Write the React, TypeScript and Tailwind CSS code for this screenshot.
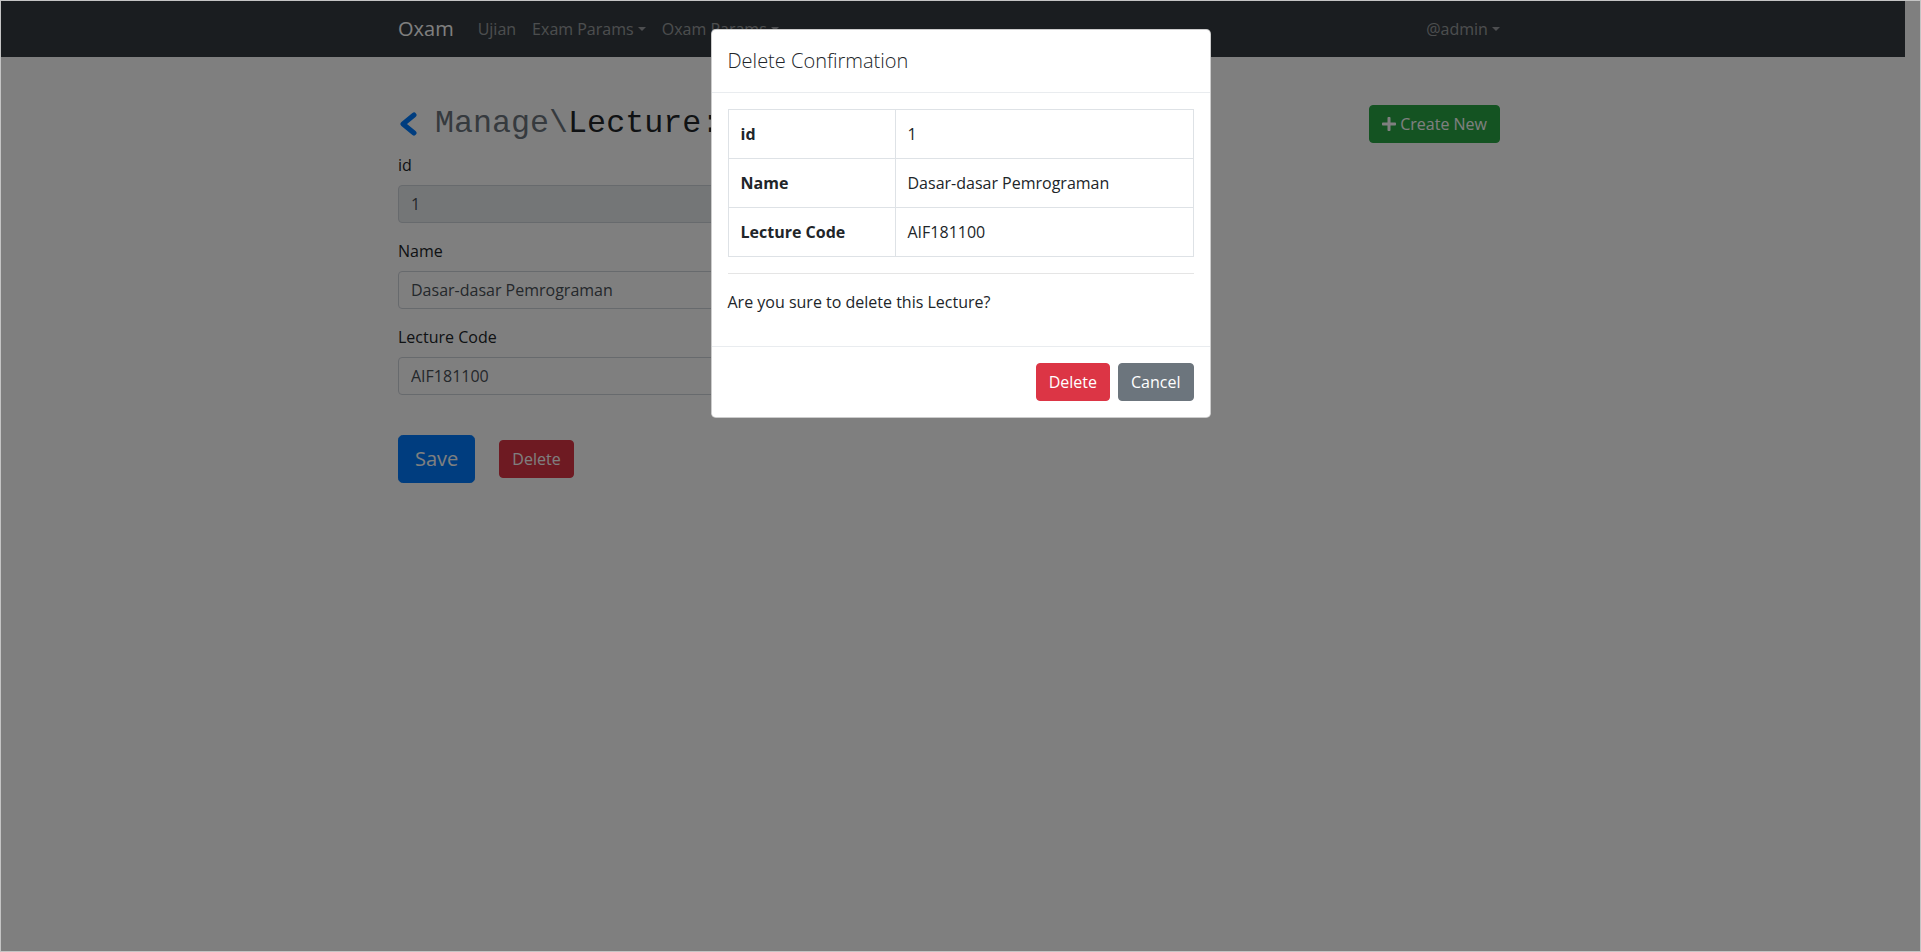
import React from "react";

// Lecture edit page with the delete-confirmation modal open on top

const sans = "font-['Open_Sans',_'Liberation_Sans',_sans-serif]";

function Caret() {
  return (
    <span className="inline-block ml-[0.255em] align-[0.255em] w-0 h-0 border-t-[0.3em] border-l-[0.3em] border-r-[0.3em] border-b-0 border-t-current border-l-transparent border-r-transparent" />
  );
}

function ChevronLeft() {
  return (
    <svg width="20" height="24" viewBox="0 0 20 24" className="shrink-0">
      <polyline
        points="16,3 5,12 16,21"
        fill="none"
        stroke="#007bff"
        strokeWidth="5"
        strokeLinecap="round"
        strokeLinejoin="round"
      />
    </svg>
  );
}

function PlusIcon() {
  return (
    <svg width="14" height="16" viewBox="0 0 448 512" className="shrink-0">
      <path
        fill="currentColor"
        d="M416 208H272V64c0-17.670-14.330-32-32-32h-32c-17.670 0-32 14.330-32 32v144H32c-17.670 0-32 14.330-32 32v32c0 17.670 14.330 32 32 32h144v144c0 17.670 14.330 32 32 32h32c17.670 0 32-14.330 32-32V304h144c17.670 0 32-14.330 32-32v-32c0-17.670-14.330-32-32-32z"
      />
    </svg>
  );
}

function Navbar() {
  return (
    <nav className="bg-[#343a40] h-[56px]">
      <div className="mx-auto w-[1140px] px-[15px] h-full flex items-center">
        <span className="text-white text-[20px] leading-[30px] py-[5px] mr-4">Oxam</span>
        <div className="flex items-center text-white/50 text-base leading-6">
          <span className="px-2 py-2">Ujian</span>
          <span className="px-2 py-2">
            Exam Params
            <Caret />
          </span>
          <span className="px-2 py-2">
            Oxam Params
            <Caret />
          </span>
        </div>
        <div className="ml-auto text-white/50 text-base leading-6">
          <span className="px-2 py-2">
            @admin
            <Caret />
          </span>
        </div>
      </div>
    </nav>
  );
}

function Field({ label, value, disabled }: { label: string; value: string; disabled?: boolean }) {
  return (
    <div className="mb-4">
      <label className="block mb-2 leading-6 text-[#212529]">{label}</label>
      <input
        readOnly
        value={value}
        className={`block w-full h-[38px] px-3 py-[6px] text-base leading-6 text-[#495057] border border-[#ced4da] rounded-[4px] outline-none ${sans} ${
          disabled ? "bg-[#e9ecef]" : "bg-white"
        }`}
      />
    </div>
  );
}

function EditPage() {
  return (
    <div className="mx-auto w-[1140px] px-[15px] pt-[48px]">
      <div className="flex items-center justify-between h-[38px]">
        <h2 className="flex items-center font-['Liberation_Mono',_monospace] text-[31.7px] leading-[38px] font-normal">
          <ChevronLeft />
          <span className="ml-[17px] text-[#6c757d]">Manage\</span>
          <span className="text-[#212529]">Lecture:Edit</span>
        </h2>
        <button className="flex items-center gap-1 h-[38px] px-3 mr-2 bg-[#28a745] border border-[#28a745] rounded-[4px] text-white text-base leading-6">
          <PlusIcon />
          <span>Create New</span>
        </button>
      </div>

      <form className="w-[540px] mt-[10px]">
        <Field label="id" value="1" disabled />
        <Field label="Name" value="Dasar-dasar Pemrograman" />
        <Field label="Lecture Code" value="AIF181100" />
        <div className="flex items-center gap-6 mt-10">
          <button
            type="button"
            className="px-4 py-2 text-[20px] leading-[30px] text-white bg-[#007bff] border border-[#007bff] rounded-[4.8px]"
          >
            Save
          </button>
          <button
            type="button"
            className="px-3 py-[6px] text-base leading-6 text-white bg-[#dc3545] border border-[#dc3545] rounded-[4px]"
          >
            Delete
          </button>
        </div>
      </form>
    </div>
  );
}

const rows = [
  ["id", "1"],
  ["Name", "Dasar-dasar Pemrograman"],
  ["Lecture Code", "AIF181100"],
];

function DeleteModal() {
  return (
    <div className="absolute left-1/2 -translate-x-1/2 top-[28px] w-[500px] bg-white border border-black/20 rounded-[4.8px] text-[#212529]">
      <div className="p-4 border-b border-[#e9ecef]">
        <h5 className="text-[20px] leading-[30px] font-light">Delete Confirmation</h5>
      </div>
      <div className="p-4">
        <table className="w-full border-collapse mb-4">
          <tbody>
            {rows.map(([k, v]) => (
              <tr key={k}>
                <th className="w-[167px] text-left font-bold p-3 leading-6 border border-[#dee2e6]">{k}</th>
                <td className="p-3 leading-6 border border-[#dee2e6]">{v}</td>
              </tr>
            ))}
          </tbody>
        </table>
        <hr className="my-4 border-0 border-t border-black/10" />
        <p className="mb-4 leading-6">Are you sure to delete this Lecture?</p>
      </div>
      <div className="flex justify-end gap-2 p-4 border-t border-[#e9ecef]">
        <button className="px-3 py-[6px] text-base leading-6 text-white bg-[#dc3545] border border-[#dc3545] rounded-[4px]">
          Delete
        </button>
        <button className="px-3 py-[6px] text-base leading-6 text-white bg-[#6c757d] border border-[#6c757d] rounded-[4px]">
          Cancel
        </button>
      </div>
    </div>
  );
}

export default function App() {
  return (
    <div className={`relative h-[952px] overflow-hidden bg-white border border-[#c4c4c4] ${sans} text-base text-[#212529]`}>
      <div className="pr-[15px]">
        <Navbar />
        <EditPage />
      </div>
      {/* backdrop */}
      <div className="absolute inset-0 bg-black/50" />
      <DeleteModal />
    </div>
  );
}
